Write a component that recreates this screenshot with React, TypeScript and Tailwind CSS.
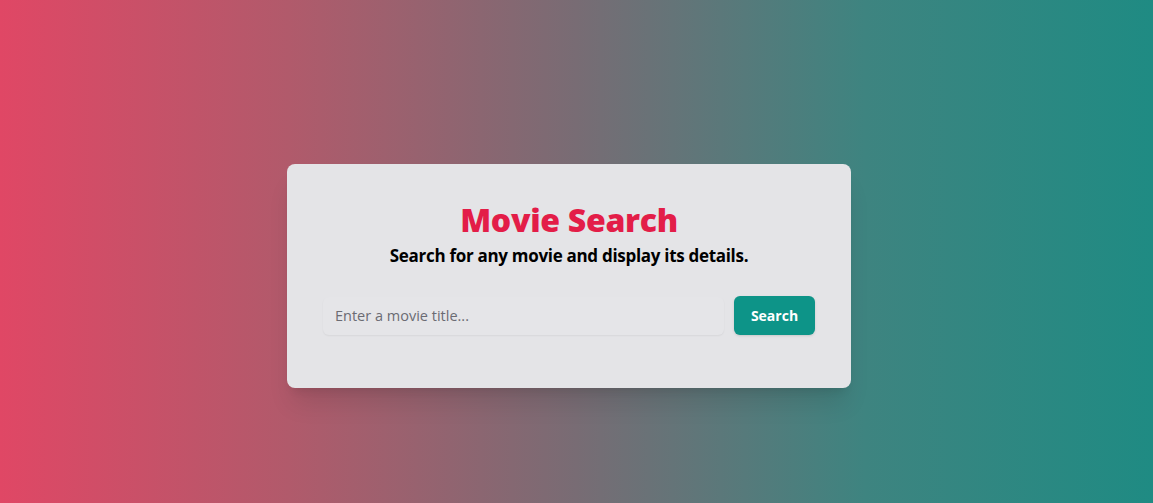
export default function App() {
  return (
    <div className="min-h-screen w-full bg-[linear-gradient(to_right,#e04765_0%,#b15a6b_25%,#786c74_50%,#3e8480_75%,#1f8b83_100%)] flex justify-center items-start pt-[164px] pr-[15px] font-['Open_Sans',sans-serif]">
      <div className="w-[564px] h-[224px] bg-[#e4e4e7] rounded-lg shadow-xl px-9 pt-[36px]">
        {/* Heading */}
        <div className="text-center">
          <h1 className="text-[32px] leading-[40px] font-extrabold text-[#e31d48] tracking-[-0.3px]">Movie Search</h1>
          <p className="mt-[3px] text-[17px] leading-[26px] font-bold text-black tracking-[-0.3px]">
            Search for any movie and display its details.
          </p>
        </div>

        {/* Search form */}
        <div className="flex items-center gap-[10px] mt-[27px]">
          <input
            type="text"
            placeholder="Enter a movie title..."
            className="flex-1 h-[38px] px-3 rounded-md bg-[#e5e5e8] shadow-[0_1px_2px_rgba(0,0,0,0.06)] text-[14.5px] text-gray-700 placeholder:text-[#6b6b73] outline-none"
          />
          <button className="w-[81px] h-[39px] rounded-md bg-[#0d9488] text-white text-[14px] font-bold shadow-sm">
            Search
          </button>
        </div>
      </div>
    </div>
  );
}
